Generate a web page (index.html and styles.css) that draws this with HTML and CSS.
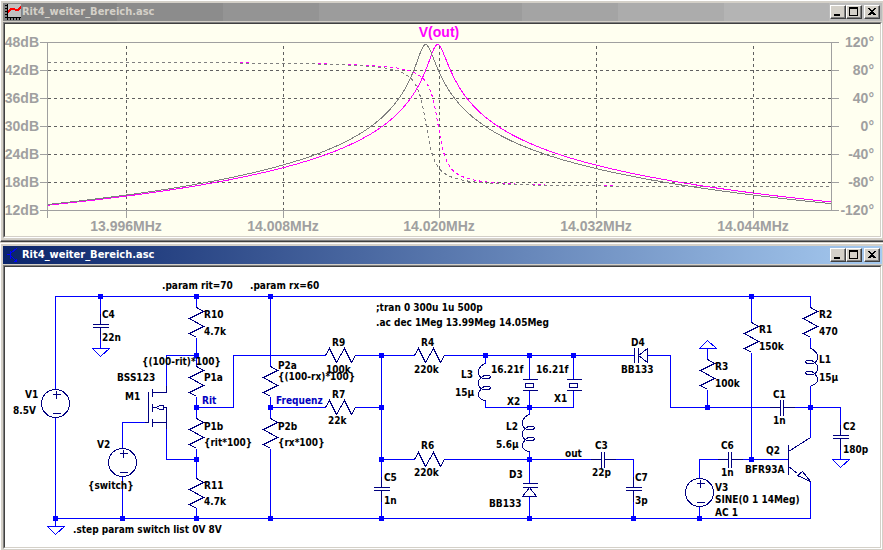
FILE: index.html
```html
<!DOCTYPE html>
<html lang="de">
<head>
    <meta charset="UTF-8">
    <meta name="viewport" content="width=device-width, initial-scale=1.0">
    <title>Rit4_weiter_Bereich.asc</title>
    <link rel="stylesheet" href="styles.css">
</head>
<body>

<section class="window inactive">
    <header class="titlebar">
        <svg class="icon" viewBox="0 0 16 16">
            <rect x="2" y="0" width="14" height="13" fill="#c0c0c0"/>
            <path d="M2.5 0V16M0 13.5H16M0 1.5H2M0 4.5H2M0 7.5H2M0 10.5H2M5.5 13V16M8.5 13V16M11.5 13V16M14.5 13V16" stroke="#000"/>
            <path d="M3 8L7 4.500H9L11 6.500L13 6L16 3" stroke="#f00" stroke-width="2" fill="none"/>
        </svg>
        <h1>Rit4_weiter_Bereich.asc</h1>
        <div class="buttons">
            <button type="button" aria-label="Minimieren"><svg viewBox="0 0 12 10"><path d="M2 8H8" stroke-width="2"/></svg></button>
            <button type="button" aria-label="Maximieren"><svg viewBox="0 0 12 10"><path d="M1.500 0V8.500H9.500V0"/><path d="M1 1H10" stroke-width="2"/></svg></button>
            <button type="button" class="close" aria-label="Schliessen"><svg viewBox="0 0 12 10"><path d="M2.500 1.500L8.500 8M3.500 1.500L9.500 8M8.500 1.500L2.500 8M9.500 1.500L3.500 8"/></svg></button>
        </div>
    </header>
    <div class="view">
        <svg class="plot" viewBox="5 24 875 212">
            <g class="grid">
                <path d="M48 70.500H831M48 98.500H831M48 126.500H831M48 154.500H831M48 182.500H831"/>
                <path d="M126.500 46V210M283.500 46V210M439.500 46V210M596.500 46V210M753.500 46V210"/>
            </g>
            <g class="axis">
                <path d="M40 42.500H839M40 210.500H839M47.500 42V218M831.500 42V211"/>
                <path d="M40 70.500H47M40 98.500H47M40 126.500H47M40 154.500H47M40 182.500H47"/>
                <path d="M832 70.500H839M832 98.500H839M832 126.500H839M832 154.500H839M832 182.500H839"/>
                <path d="M126.500 210V218M283.500 210V218M439.500 210V218M596.500 210V218M753.500 210V218"/>
            </g>
            <path class="trace magenta dashed" id="phase1"/>
            <path class="trace gray dashed" id="phase2"/>
            <path class="trace magenta" id="gain1"/>
            <path class="trace gray" id="gain2"/>
            <g class="right">
                <text x="39" y="47">48dB</text>
                <text x="39" y="75">42dB</text>
                <text x="39" y="103">36dB</text>
                <text x="39" y="131">30dB</text>
                <text x="39" y="159">24dB</text>
                <text x="39" y="187">18dB</text>
                <text x="39" y="215">12dB</text>
                <text x="874" y="47">120°</text>
                <text x="874" y="75">80°</text>
                <text x="874" y="103">40°</text>
                <text x="874" y="131">0°</text>
                <text x="874" y="159">-40°</text>
                <text x="874" y="187">-80°</text>
                <text x="874" y="215">-120°</text>
            </g>
            <g class="middle">
                <text x="126" y="231">13.996MHz</text>
                <text x="283" y="231">14.008MHz</text>
                <text x="439" y="231">14.020MHz</text>
                <text x="596" y="231">14.032MHz</text>
                <text x="753" y="231">14.044MHz</text>
                <text class="name" x="439" y="37">V(out)</text>
            </g>
        </svg>
    </div>
</section>

<section class="window active">
    <header class="titlebar">
        <svg class="icon" viewBox="0 0 16 16">
            <path d="M2 7.500H5M5.500 4V12M6 6L12 1M6 9L12 15M9 14.500H12M11.500 12V15" stroke="#00f" fill="none"/>
        </svg>
        <h2>Rit4_weiter_Bereich.asc</h2>
        <div class="buttons">
            <button type="button" aria-label="Minimieren"><svg viewBox="0 0 12 10"><path d="M2 8H8" stroke-width="2"/></svg></button>
            <button type="button" aria-label="Maximieren"><svg viewBox="0 0 12 10"><path d="M1.500 0V8.500H9.500V0"/><path d="M1 1H10" stroke-width="2"/></svg></button>
            <button type="button" class="close" aria-label="Schliessen"><svg viewBox="0 0 12 10"><path d="M2.500 1.500L8.500 8M3.500 1.500L9.500 8M8.500 1.500L2.500 8M9.500 1.500L3.500 8"/></svg></button>
        </div>
    </header>
    <div class="view">
        <svg class="schematic" viewBox="5 267 875 280">
            <defs>
                <path id="res" d="M0 0L7 4L-7 11L7 19L-7 26L0 30"/>
                <path id="cap" d="M-8 0H8M-8 3H8M0 -11V0M0 3V14"/>
                <path id="coil" d="M0 0C-4 1 -7 5 -7 8C-7 12 -5 15 -1 15H4L5 13L4 12H-1C-4 13 -7 16 -7 19C-7 23 -5 26 -1 26H4L5 24L4 23H-1C-4 24 -7 28 -7 31C-7 34 -4 37 0 37"/>
                <path id="gnd" d="M-8 0H9L0 8Z"/>
                <g id="source">
                    <circle r="14"/>
                    <path d="M-3 -9H5M1 -13V-5M-3 10H5"/>
                </g>
                <path id="varicap" d="M-7 0H8M-7 4H8M0 4L-7 13H7Z"/>
                <path id="crystal" d="M-7 0H8M-7 11H8M-4 4H4V8H-4Z"/>
            </defs>

            <!-- wires, shifted by half a pixel so the lines stay sharp -->
            <g class="wire" transform="translate(.5 .5)">
                <path d="M55 389V296H810V307M55 417V526M55 518H810V481"/>
                <path d="M100 296V324M100 327V348"/>
                <path d="M196 296V307M196 337V366M196 396V418M196 448V478M196 507V518"/>
                <path d="M196 355H166V385M196 407H233V355H325M196 459H166V428"/>
                <path d="M122 448V422H144M122 476V518"/>
                <path d="M270 296V366M270 396V418M270 448V518M270 407H325"/>
                <path d="M355 355H414M355 407H381M381 355V487M381 490V518M381 459H414"/>
                <path d="M444 355H634M444 459H601M605 459H633V487M633 490V518"/>
                <path d="M485 355V363M485 400V407H573V390M573 355V379M529 355V379M529 390V414M529 451V483M529 496V518"/>
                <path d="M647 355H670V407H779M783 407H840V435M840 438V459"/>
                <path d="M707 348V359M707 389V407M751 296V322M751 352V459M810 337V348M810 385V437"/>
                <path d="M699 478V459H727M731 459H788M699 506V518"/>
                <use href="#gnd" x="100" y="348"/>
                <use href="#gnd" x="55" y="526"/>
                <use href="#gnd" x="840" y="459"/>
                <use href="#gnd" transform="translate(707 348) scale(1 -1)"/>
            </g>

            <g class="part" transform="translate(.5 .5)">
                <use href="#res" x="196" y="307"/>
                <use href="#res" x="196" y="366"/>
                <use href="#res" x="196" y="418"/>
                <use href="#res" x="196" y="478"/>
                <use href="#res" x="270" y="366"/>
                <use href="#res" x="270" y="418"/>
                <use href="#res" x="707" y="359"/>
                <use href="#res" x="751" y="322"/>
                <use href="#res" x="810" y="307"/>
                <use href="#res" transform="translate(325 355) rotate(-90)"/>
                <use href="#res" transform="translate(325 407) rotate(-90)"/>
                <use href="#res" transform="translate(414 355) rotate(-90)"/>
                <use href="#res" transform="translate(414 459) rotate(-90)"/>
                <use href="#cap" x="100" y="324"/>
                <use href="#cap" x="381" y="487"/>
                <use href="#cap" x="633" y="487"/>
                <use href="#cap" x="840" y="435"/>
                <use href="#cap" transform="translate(601 459) rotate(-90)"/>
                <use href="#cap" transform="translate(728 459) rotate(-90)"/>
                <use href="#cap" transform="translate(780 407) rotate(-90)"/>
                <use href="#coil" x="485" y="363"/>
                <use href="#coil" x="529" y="414"/>
                <use href="#coil" transform="translate(810 348) scale(-1 1)"/>
                <use href="#source" x="55" y="403"/>
                <use href="#source" x="122" y="462"/>
                <use href="#source" x="699" y="492"/>
                <use href="#varicap" x="529" y="483"/>
                <use href="#varicap" transform="translate(634 355) rotate(-90)"/>
                <use href="#crystal" x="529" y="379"/>
                <use href="#crystal" x="573" y="379"/>
                <!-- M1 -->
                <path d="M144 422H148V391M152 388V396M152 403V411M152 418V426M152 392H166V385M152 422H166M152 407H155L160 405H163V409H160L155 407M163 407H166V428"/>
                <!-- Q2 -->
                <path d="M788 444V474M788 451L810 437M788 466L797 473M797 475L802 471L810 481Z"/>
            </g>

            <path class="node" d="M55 518.500h0M100 296.500h0M122 518.500h0M196 296.500h0M196 355.500h0M196 407.500h0M196 459.500h0M196 518.500h0M270 296.500h0M270 407.500h0M270 518.500h0M381 355.500h0M381 407.500h0M381 459.500h0M381 518.500h0M485 355.500h0M529 355.500h0M573 355.500h0M529 407.500h0M529 459.500h0M529 518.500h0M633 518.500h0M699 518.500h0M707 407.500h0M751 296.500h0M751 459.500h0M810 407.500h0" transform="translate(.5 0)"/>

            <text x="162" y="289">.param rit=70</text>
            <text x="250" y="289">.param rx=60</text>
            <text x="376" y="311">;tran 0 300u 1u 500p</text>
            <text x="376" y="326">.ac dec 1Meg 13.99Meg 14.05Meg</text>
            <text x="73" y="533">.step param switch list 0V 8V</text>

            <text x="102" y="318">C4</text>
            <text x="102" y="341">22n</text>
            <text x="204" y="318">R10</text>
            <text x="204" y="335">4.7k</text>
            <text x="142" y="365">{(100-rit)*100}</text>
            <text x="204" y="381">P1a</text>
            <text x="117" y="381">BSS123</text>
            <text x="125" y="400">M1</text>
            <text x="204" y="430">P1b</text>
            <text x="204" y="446">{rit*100}</text>
            <text x="204" y="489">R11</text>
            <text x="204" y="505">4.7k</text>
            <text x="25" y="398">V1</text>
            <text x="13" y="414">8.5V</text>
            <text x="97" y="448">V2</text>
            <text x="88" y="489">{switch}</text>
            <text class="net" x="202" y="404">Rit</text>
            <text class="net" x="276" y="404">Frequenz</text>

            <text x="278" y="369">P2a</text>
            <text x="278" y="380">{(100-rx)*100}</text>
            <text x="278" y="430">P2b</text>
            <text x="278" y="446">{rx*100}</text>
            <text x="332" y="346">R9</text>
            <text x="326" y="373">100k</text>
            <text x="332" y="398">R7</text>
            <text x="328" y="424">22k</text>
            <text x="421" y="346">R4</text>
            <text x="414" y="373">220k</text>
            <text x="421" y="449">R6</text>
            <text x="414" y="476">220k</text>
            <text x="384" y="481">C5</text>
            <text x="384" y="504">1n</text>

            <text x="461" y="378">L3</text>
            <text x="455" y="396">15µ</text>
            <text x="491" y="373">16.21f</text>
            <text x="536" y="373">16.21f</text>
            <text x="507" y="405">X2</text>
            <text x="554" y="402">X1</text>
            <text x="631" y="346">D4</text>
            <text x="621" y="373">BB133</text>
            <text x="506" y="430">L2</text>
            <text x="496" y="448">5.6µ</text>
            <text x="565" y="457">out</text>
            <text x="595" y="449">C3</text>
            <text x="592" y="476">22p</text>
            <text x="509" y="478">D3</text>
            <text x="489" y="507">BB133</text>
            <text x="635" y="481">C7</text>
            <text x="635" y="504">3p</text>

            <text x="819" y="318">R2</text>
            <text x="819" y="335">470</text>
            <text x="759" y="333">R1</text>
            <text x="759" y="350">150k</text>
            <text x="715" y="370">R3</text>
            <text x="715" y="387">100k</text>
            <text x="819" y="363">L1</text>
            <text x="819" y="381">15µ</text>
            <text x="773" y="398">C1</text>
            <text x="773" y="424">1n</text>
            <text x="843" y="430">C2</text>
            <text x="843" y="453">180p</text>
            <text x="766" y="454">Q2</text>
            <text x="745" y="473">BFR93A</text>
            <text x="721" y="449">C6</text>
            <text x="721" y="476">1n</text>
            <text x="715" y="491">V3</text>
            <text x="715" y="503">SINE(0 1 14Meg)</text>
            <text x="715" y="516">AC 1</text>
        </svg>
    </div>
</section>

<script src="traces.js"></script>
</body>
</html>
```
FILE: styles.css
```css
body {
    margin: 0;
    background-color: #d4d0c8;
    font-family: "DejaVu Sans Condensed", "DejaVu Sans", Tahoma, sans-serif;
}

.window {
    background-color: #d4d0c8;
    border-top: 1px solid white;
    border-left: 1px solid white;
    border-bottom: 1px solid #404040;
    box-shadow: inset 0 -1px #808080;
    padding: 2px 1px 3px 2px;
}

.window + .window {
    margin-top: 1px;
    border-bottom: 0;
    box-shadow: none;
    padding-bottom: 1px;
}

.titlebar {
    display: flex;
    align-items: center;
    height: 18px;
    margin-bottom: 1px;
    padding: 0 2px;
}

.inactive .titlebar {
    color: #d4d0c8;
    background: linear-gradient(to right,
        #848484 13%, #8c8c8c 13% 25%, #949494 25% 36%, #9c9c9c 36% 59%,
        #a4a4a4 59% 70%, #acacac 70% 82%, #b4b4b4 82% 94%, #bcbcbc 94%);
}

.active .titlebar {
    color: white;
    background: linear-gradient(to right, #0a246a, #a6caf0);
}

.icon {
    width: 16px;
    height: 16px;
    shape-rendering: crispEdges;
}

h1, h2 {
    flex: 1;
    margin: 0 0 0 1px;
    font-size: 11px;
    line-height: 20px;
    font-weight: bold;
}

.buttons {
    display: flex;
}

button {
    width: 16px;
    height: 14px;
    padding: 0;
    border: 1px solid;
    border-color: white #404040 #404040 white;
    box-shadow: inset -1px -1px #808080;
    background-color: #d4d0c8;
}

button svg {
    display: block;
    width: 12px;
    height: 10px;
    margin: 1px;
    fill: none;
    stroke: black;
    shape-rendering: crispEdges;
}

.close {
    margin-left: 2px;
}

.view {
    border: 1px solid;
    border-color: #808080 white white #808080;
}

.plot, .schematic {
    display: block;
    width: 100%;
    box-sizing: border-box;
    border: 1px solid;
    border-color: #404040 #d4d0c8 #d4d0c8 #404040;
    fill: none;
    shape-rendering: crispEdges;
}

/* plot */
.plot {
    background-color: #fffff0;
}

.plot text {
    font-family: "Liberation Sans", Arial, sans-serif;
    font-size: 14px;
    font-weight: bold;
    fill: #a0a0a0;
}

.plot .name {
    fill: magenta;
}

.right {
    text-anchor: end;
}

.middle {
    text-anchor: middle;
}

.axis {
    stroke: #a0a0a0;
}

.grid {
    stroke: #606060;
    stroke-dasharray: 3 3;
}

.magenta {
    stroke: magenta;
}

.gray {
    stroke: gray;
}

.dashed {
    stroke-dasharray: 3 3;
}

/* schematic */
.schematic {
    background-color: white;
}

.schematic text {
    font-size: 10px;
    font-weight: bold;
    fill: black;
}

.schematic .net {
    fill: #0000c0;
}

.wire {
    stroke: blue;
}

.part {
    stroke: #000080;
}

.node {
    stroke: blue;
    stroke-width: 5;
    stroke-linecap: square;
}
```
FILE: traces.js
```javascript
// resonance curve: 28px per 6dB, the two sides have a slightly different width
function gain(x, x0, left, right) {
    const u = (x - x0) / (x < x0 ? left : right);
    return 44.5 + 46.67 * Math.log10(1 + u * u);
}

function phase(x, x0) {
    return 124.5 + 63 * 2 / Math.PI * Math.atan((x - x0) / 6.8);
}

function draw(id, f) {
    let d = "";
    for (let x = 48; x <= 831; x++) {
        d += (d ? "L" : "M") + x + " " + f(x).toFixed(1);
    }
    document.getElementById(id).setAttribute("d", d);
}

draw("gain1", x => gain(x, 437.5, 7.4, 8.1));
draw("gain2", x => gain(x, 425.5, 7.3, 8));
draw("phase1", x => phase(x, 438));
draw("phase2", x => phase(x, 426));
```
